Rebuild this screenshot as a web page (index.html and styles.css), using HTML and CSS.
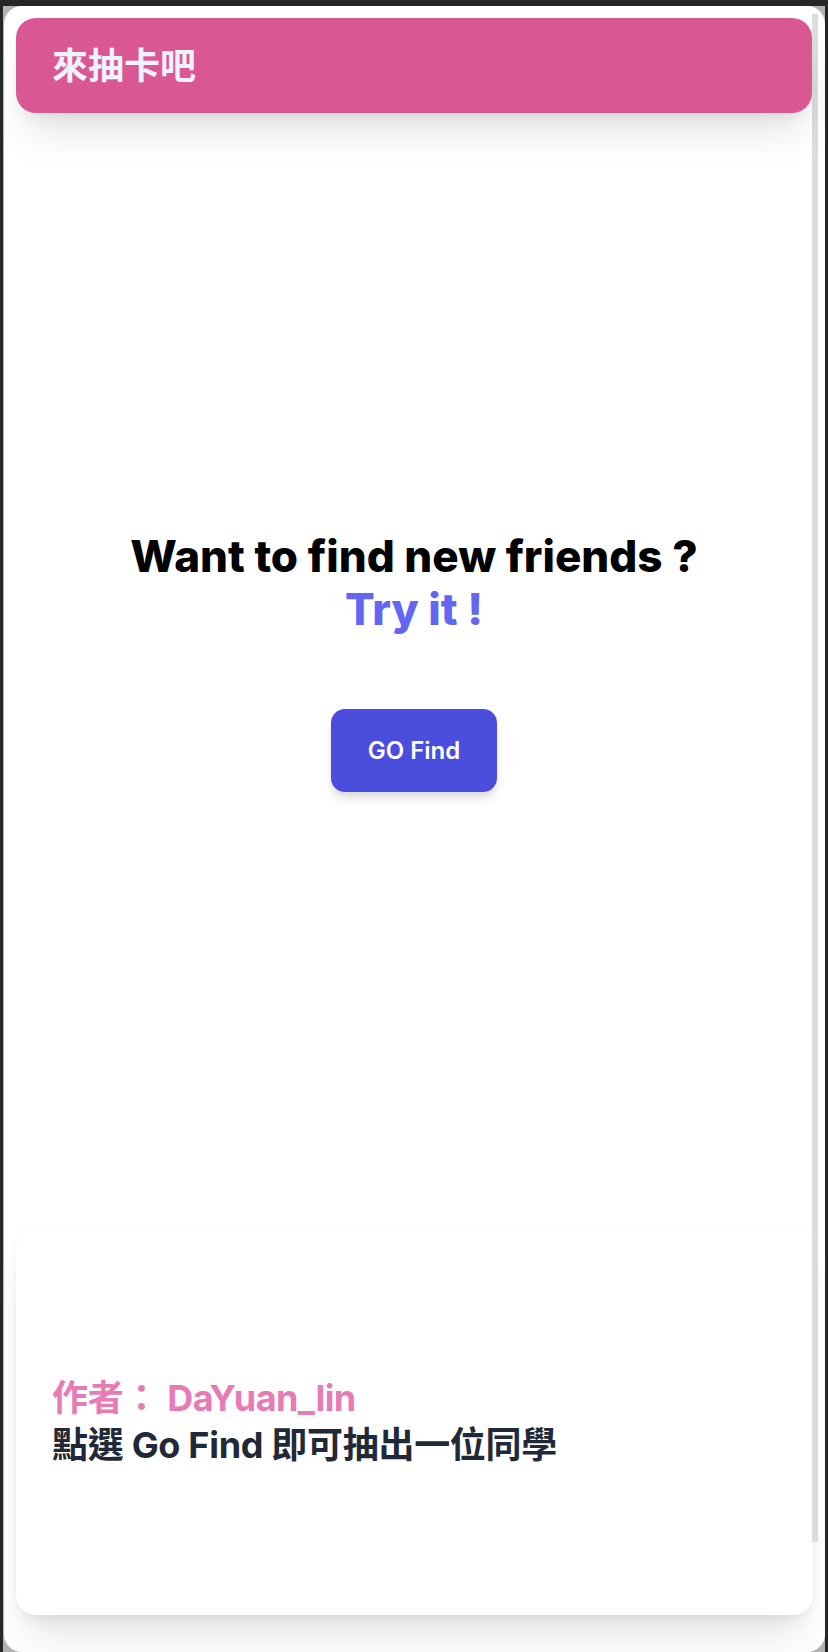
FILE: index.html
```html
<!DOCTYPE html>
<html lang="zh-Hant">
<head>
<meta charset="utf-8">
<title>來抽卡吧</title>
<link rel="stylesheet" href="styles.css">
</head>
<body>
<div class="window">
  <div class="screen">
    <main class="main">
      <header class="topbar">
        <h1 class="brand">來抽卡吧</h1>
      </header>
      <section class="hero">
        <h2 class="hero-title">Want to find new friends ?</h2>
        <p class="hero-sub">Try it !</p>
        <button class="go-btn" type="button">GO Find</button>
      </section>
      <section class="info-card">
        <p class="author">作者： <span class="author-name">DaYuan_lin</span></p>
        <p class="hint">點選 Go Find 即可抽出一位同學</p>
      </section>
    </main>
    <div class="scroll-track"></div>
  </div>
</div>
</body>
</html>
```

FILE: styles.css
```css
* { box-sizing: border-box; }

html, body {
  margin: 0;
  padding: 0;
}

body {
  background: #262626;
  width: 828px;
  height: 1652px;
  overflow: hidden;
  padding: 6px 3px 0 3px;
  font-family: Inter, "Noto Sans CJK TC", "Noto Sans", sans-serif;
}

.window {
  width: 822px;
  height: 1646px;
  background: #b3b3b3;
  padding-left: 1px;
}

.screen {
  width: 821px;
  height: 1646px;
  background: #ffffff;
  border-radius: 18px;
  display: flex;
  flex-direction: row;
  overflow: hidden;
}

.main {
  width: 808px;
  padding: 12px 0 37px 12px;
  display: flex;
  flex-direction: column;
}

.topbar {
  height: 95px;
  background: #d95893;
  border-radius: 20px;
  display: flex;
  align-items: center;
  padding-left: 36px;
  box-shadow: 0 30px 40px -10px rgba(0,0,0,0.10), 0 12px 16px -8px rgba(0,0,0,0.08);
  position: relative;
  z-index: 1;
}

.brand {
  margin: 0;
  font-size: 36px;
  font-weight: 700;
  color: #eef2ff;
  line-height: 1;
}

.hero {
  flex: 1;
  display: flex;
  flex-direction: column;
  align-items: center;
  justify-content: center;
  padding-bottom: 20px;
}

.hero-title,
.hero-sub {
  margin: 0;
  font-size: 44px;
  line-height: 53px;
  font-weight: 800;
}

.hero-title { color: #000000; }
.hero-sub { color: #6366f1; }

.go-btn {
  margin-top: 73px;
  width: 166px;
  height: 83px;
  border: none;
  border-radius: 14px;
  background: #4b4ddc;
  color: #ffffff;
  font-family: Inter, "Noto Sans CJK TC", sans-serif;
  font-size: 24px;
  font-weight: 600;
  box-shadow: 0 8px 12px -2px rgba(0,0,0,0.12), 0 4px 8px -4px rgba(0,0,0,0.12);
}

.info-card {
  height: 387px;
  width: 797px;
  background: #ffffff;
  border-radius: 20px;
  padding-left: 36px;
  display: flex;
  flex-direction: column;
  justify-content: center;
  box-shadow: 0 30px 40px -10px rgba(0,0,0,0.10), 0 12px 16px -8px rgba(0,0,0,0.08), 0 0 6px rgba(0,0,0,0.03);
}

.author,
.hint {
  margin: 0;
  font-size: 36px;
  line-height: 47px;
  font-weight: 700;
  letter-spacing: -0.3px;
}

.author { color: #e67bb5; }
.author-name { letter-spacing: -0.6px; }
.hint { color: #1f2937; }

.scroll-track {
  width: 6px;
  height: 1528px;
  margin-top: 8px;
  background: #dcdcdc;
  flex-shrink: 0;
}
```
